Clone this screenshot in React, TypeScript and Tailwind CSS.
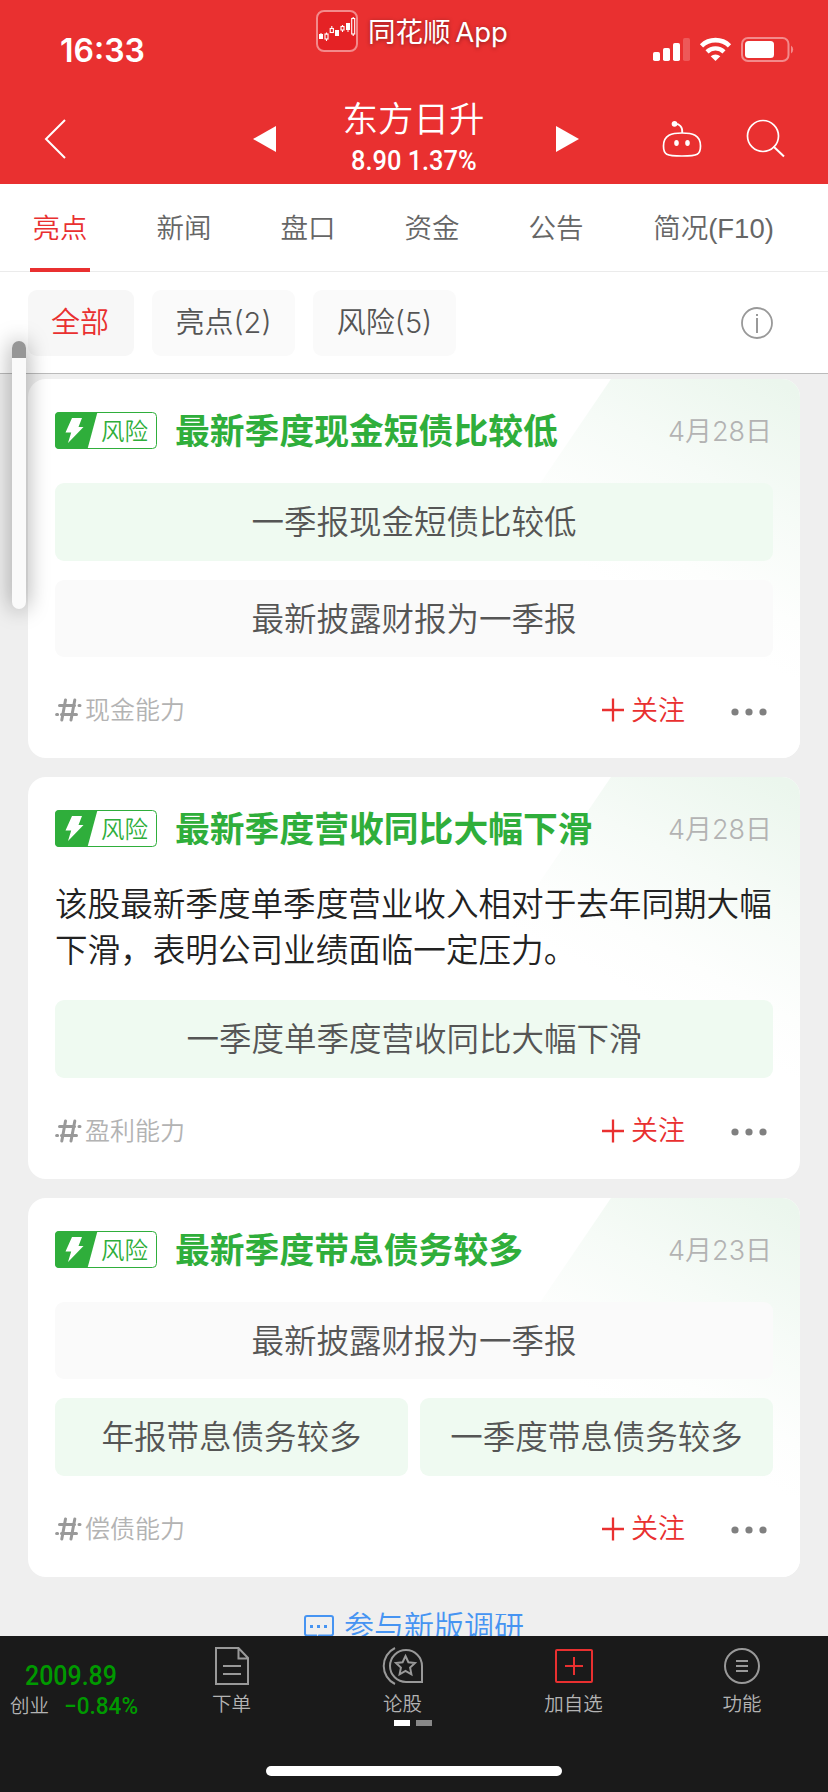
import type { ReactNode } from "react";

type Fact = { text: string; tone: "green" | "gray"; half?: boolean };

type Risk = {
  title: string;
  date: string;
  desc?: string;
  facts: Fact[];
  tag: string;
};

const TABS = ["亮点", "新闻", "盘口", "资金", "公告", "简况(F10)"];

const RISKS: Risk[] = [
  {
    title: "最新季度现金短债比较低",
    date: "4月28日",
    facts: [
      { text: "一季报现金短债比较低", tone: "green" },
      { text: "最新披露财报为一季报", tone: "gray" },
    ],
    tag: "现金能力",
  },
  {
    title: "最新季度营收同比大幅下滑",
    date: "4月28日",
    desc: "该股最新季度单季度营业收入相对于去年同期大幅下滑，表明公司业绩面临一定压力。",
    facts: [{ text: "一季度单季度营收同比大幅下滑", tone: "green" }],
    tag: "盈利能力",
  },
  {
    title: "最新季度带息债务较多",
    date: "4月23日",
    facts: [
      { text: "最新披露财报为一季报", tone: "gray" },
      { text: "年报带息债务较多", tone: "green", half: true },
      { text: "一季度带息债务较多", tone: "green", half: true },
    ],
    tag: "偿债能力",
  },
];

const AppLogo = () => (
  <svg width="42" height="42" viewBox="0 0 42 42" fill="none">
    <rect x="1" y="1" width="40" height="40" rx="7" fill="#e52225" stroke="#f38a8b" strokeWidth="2" />
    <g fill="#fff">
      <path d="M4.500 23h1v2h-1zM31.500 20h1v2h-1z" />
      <rect x="3" y="24" width="4" height="5" />
      <rect x="19" y="20" width="4" height="6" />
      <rect x="30" y="13" width="4" height="7" />
    </g>
    <g stroke="#fff" strokeWidth="1.100">
      <path d="M10.500 22.500v2M10.500 29v2M15.800 16v2.500M26.500 15v2M26.500 20v2M37.200 7v1.500M37.200 24v2" />
      <rect x="9" y="24" width="3" height="5" />
      <rect x="14.200" y="18.500" width="3.200" height="4" />
      <rect x="25" y="16.500" width="3" height="3.500" />
      <rect x="35.700" y="8.500" width="3" height="15.500" />
    </g>
  </svg>
);

const StatusIcons = () => (
  <svg width="142" height="26" viewBox="0 0 142 26" fill="none">
    <g fill="#fff">
      <rect x="0" y="15" width="7" height="9" rx="1.800" />
      <rect x="10" y="11" width="7" height="13" rx="1.800" />
      <rect x="20" y="6" width="7" height="18" rx="1.800" />
      <rect x="30" y="1" width="7" height="23" rx="1.800" opacity=".2" />
      <path d="M62.500 24l-4.800-4.700a7.200 7.200 0 0 1 9.600 0z" />
    </g>
    <path d="M48.500 8.800a20 20 0 0 1 28 0" stroke="#fff" strokeWidth="4.600" />
    <path d="M54 14.800a12.300 12.300 0 0 1 17 0" stroke="#fff" strokeWidth="4.400" />
    <rect x="89" y="1" width="46.500" height="23" rx="6" stroke="#f38a8b" strokeWidth="2" />
    <rect x="92" y="4" width="29" height="17" rx="3.500" fill="#fff" />
    <path d="M138 8.500a4.800 4.800 0 0 1 0 8z" fill="#f38a8b" />
  </svg>
);

const RobotIcon = () => (
  <svg width="42" height="38" viewBox="0 0 42 38" fill="none" stroke="#fff" strokeWidth="1.700">
    <path d="M21 13c10 0 18.500 1.500 18.500 13 0 8.500-2.500 10-18.500 10S2.500 34.500 2.500 26C2.500 14.500 11 13 21 13z" />
    <path d="M13.500 4c5-.500 8.500 3 7.700 9" />
    <circle cx="13.500" cy="3.800" r="2" fill="#fff" />
    <g fill="#fff" stroke="none">
      <ellipse cx="15.500" cy="23" rx="2.300" ry="3" />
      <ellipse cx="26.500" cy="23" rx="2.300" ry="3" />
    </g>
  </svg>
);

const RiskBadge = () => (
  <div className="relative h-[37px] w-[102px] shrink-0">
    <svg className="block" width="102" height="37" viewBox="0 0 102 37" fill="none">
      <rect x=".5" y=".5" width="101" height="36" rx="4" fill="#fff" stroke="#2fae3b" />
      <path d="M4 0h38.500L32.500 37H4a4 4 0 0 1-4-4V4a4 4 0 0 1 4-4z" fill="#2fae3b" />
      <path d="M17 6h10l-3.500 9H28.500L13 31l3.200-10.500H10.500z" fill="#fff" />
    </svg>
    <span className="absolute top-[1px] left-[46px] text-[23.500px] leading-[37px] whitespace-nowrap text-[#2fae3b]">
      风险
    </span>
  </div>
);

const HashIcon = () => (
  <svg width="27" height="24" viewBox="0 0 27 24" fill="none" stroke="#999" strokeWidth="3" strokeLinecap="round">
    <path d="M10.500 2L6.800 22M19.800 2L16 22M4.500 7.500H19.500M24 7.500h1M6.500 16.500H21.500M1.600 16.500h1" />
  </svg>
);

const RiskCard = ({ risk }: { risk: Risk }) => (
  <article className="relative overflow-hidden rounded-[18px] bg-white px-[27px] pt-[33px] pb-7">
    {/* slanted green glow in the top right corner */}
    <svg className="absolute top-0 right-0" width="360" height="380" viewBox="0 0 360 380">
      <defs>
        <linearGradient id="glow" gradientUnits="userSpaceOnUse" x1="350" y1="10" x2="230" y2="235">
          <stop offset="0" stopColor="#ebf6ed" />
          <stop offset=".45" stopColor="#f6fbf7" />
          <stop offset=".8" stopColor="#fdfefd" />
          <stop offset="1" stopColor="#fff" />
        </linearGradient>
      </defs>
      <path d="M171 0h189v380H-87z" fill="url(#glow)" />
    </svg>
    <div className="relative">
      <header className="flex h-[37px] items-center">
        <RiskBadge />
        <h2 className="mt-[2px] ml-[18px] text-[34.800px] leading-[37px] font-bold whitespace-nowrap text-[#2fae3b]">
          {risk.title}
        </h2>
        <time className="mt-[2px] mr-[1px] ml-auto text-[27px] leading-[37px] whitespace-nowrap text-[#b3b3b3]">
          {risk.date}
        </time>
      </header>
      {risk.desc && (
        <p className="mt-[34px] -mb-[7px] text-[32.600px] leading-[46px] break-all text-[#222]">{risk.desc}</p>
      )}
      <div className="mt-[34px] grid grid-cols-2 gap-x-3 gap-y-[19px]">
        {risk.facts.map((fact) => (
          <div
            key={fact.text}
            className={`flex h-[77.500px] items-center justify-center rounded-[9px] pt-[4px] text-[32.500px] whitespace-nowrap text-[#555] ${
              fact.half ? "" : "col-span-2"
            } ${fact.tone === "green" ? "bg-[#effaf1]" : "bg-[#fafafa]"}`}
          >
            {fact.text}
          </div>
        ))}
      </div>
      <footer className="mt-[33px] flex h-10 items-center">
        <HashIcon />
        <span className="mt-[2px] ml-[3px] text-[25px] text-[#b3b3b3]">{risk.tag}</span>
        <button className="ml-auto flex items-center text-[27px] text-[#e93030]">
          <svg className="mr-[7px]" width="22" height="24" viewBox="0 0 22 24" stroke="#e93030" strokeWidth="2.300">
            <path d="M0 12h22M11 .5v23" />
          </svg>
          <span className="mt-[2px]">关注</span>
        </button>
        <svg className="mt-[3px] mr-[6px] ml-[46px]" width="36" height="8" viewBox="0 0 36 8" fill="#808080">
          <circle cx="4" cy="4" r="3.600" />
          <circle cx="18" cy="4" r="3.600" />
          <circle cx="32" cy="4" r="3.600" />
        </svg>
      </footer>
    </div>
  </article>
);

const NavItem = ({ label, children }: { label: string; children: ReactNode }) => (
  <button className="flex w-[171px] flex-col items-center last:w-[166px]">
    <span className="flex h-[44px] items-center justify-center">{children}</span>
    <span className="mt-[2px] text-[19.500px] leading-[28px] text-[#b3b3b3]">{label}</span>
  </button>
);

export default function App() {
  return (
    <div className="relative flex h-[1792px] w-[828px] flex-col overflow-hidden bg-[#efefef] font-[Inter,'Noto_Sans_CJK_SC',sans-serif] font-[350]">
      <div className="h-[184px] shrink-0 bg-[#e93030] text-white">
        <div className="flex h-[84px]">
          <span className="w-[316px] pt-[33px] pl-[60px] text-[32px] leading-[36px] font-semibold">16:33</span>
          <div className="flex items-start gap-[10px] pt-[10px]">
            <AppLogo />
            <span className="text-[27.500px] leading-[44px] font-normal whitespace-nowrap [text-shadow:0_1px_4px_#0006] [word-spacing:-3px]">
              同花顺 App
            </span>
          </div>
          <div className="ml-auto pt-[37px] pr-[33px]">
            <StatusIcons />
          </div>
        </div>
        <div className="flex h-[100px] items-start">
          <svg className="mt-[35px] ml-[44px]" width="22" height="40" viewBox="0 0 22 40" fill="none" stroke="#fff" strokeWidth="2">
            <path d="M21 1L2 20l19 19" />
          </svg>
          <svg className="mt-[42px] ml-[187px]" width="23" height="26" viewBox="0 0 23 26" fill="#fff">
            <path d="M23 0v26L0 13z" />
          </svg>
          <div className="flex w-[280px] flex-col items-center pr-[5px]">
            <h1 className="mt-[15px] text-[35.500px] leading-[42px]">东方日升</h1>
            <p className="mt-[5px] origin-center scale-x-[.94] font-[Roboto,sans-serif] text-[27px] leading-[30px] font-medium whitespace-nowrap">
              8.90 1.37%
            </p>
          </div>
          <svg className="mt-[42px]" width="23" height="26" viewBox="0 0 23 26" fill="#fff">
            <path d="M0 0v26l23-13z" />
          </svg>
          <div className="mt-[36px] ml-[82px]">
            <RobotIcon />
          </div>
          <svg className="mt-[35px] ml-[43px]" width="40" height="40" viewBox="0 0 40 40" fill="none" stroke="#fff" strokeWidth="1.700">
            <circle cx="17" cy="17" r="15.500" />
            <path d="M27.500 27.500L38 37.500" strokeWidth="2" />
          </svg>
        </div>
      </div>

      <nav className="flex h-[88px] shrink-0 border-b border-[#ebebeb] bg-white pl-[30px] font-['Liberation_Sans','Noto_Sans_CJK_SC',sans-serif] text-[27.500px] text-[#666]">
        {TABS.map((tab, i) => (
          <button
            key={tab}
            className={`relative mr-[64px] flex h-[88px] w-[60px] shrink-0 items-center justify-center pt-[2px] whitespace-nowrap last:w-[127px] ${
              i === 0 ? "text-[#e93030]" : ""
            }`}
          >
            {tab}
            {i === 0 && <span className="absolute inset-x-0 bottom-0 h-1 bg-[#e93030]" />}
          </button>
        ))}
      </nav>

      <div className="flex h-[102px] shrink-0 items-center border-b border-[#bbb] bg-white pl-7 text-[29px] text-[#555]">
        <button className="h-[66px] w-[106px] rounded-[9px] bg-[#f7f7f7] pr-[2px] text-[#e93030]">全部</button>
        <button className="ml-[18px] h-[66px] w-[143px] rounded-[9px] bg-[#fafafa]">亮点(2)</button>
        <button className="ml-[18px] h-[66px] w-[143px] rounded-[9px] bg-[#fafafa]">风险(5)</button>
        <svg className="mr-[55px] ml-auto" width="32" height="32" viewBox="0 0 32 32" fill="none" stroke="#999">
          <circle cx="16" cy="16" r="15" strokeWidth="1.800" />
          <path d="M16 11v15M16 7v2" strokeWidth="2" />
        </svg>
      </div>

      <main className="flex min-h-0 flex-1 flex-col overflow-hidden px-7 pt-[5px]">
        <div className="flex flex-col gap-[19px]">
          {RISKS.map((risk) => (
            <RiskCard key={risk.title} risk={risk} />
          ))}
        </div>
        {/* partly scrolled under the bottom bar */}
        <a className="mt-[30px] flex h-[40px] shrink-0 items-center justify-center gap-[10px] text-[30px] whitespace-nowrap text-[#4694f2]">
          <svg className="mt-[5px]" width="30" height="28" viewBox="0 0 30 28" fill="none" stroke="#4694f2" strokeWidth="2">
            <path d="M12 20.500H3a2 2 0 0 1-2-2V3a2 2 0 0 1 2-2h24a2 2 0 0 1 2 2v15.500a2 2 0 0 1-2 2H15l-3 4z" />
            <path d="M6 11.500h3M13 11.500h3M20 11.500h3" strokeWidth="3" />
          </svg>
          参与新版调研
        </a>
      </main>

      <div className="flex h-[156px] shrink-0 flex-col bg-[#1a1a1a]">
        <div className="flex h-[130px] pt-2">
          <div className="w-[146px] pt-[17px]">
            <p className="w-[142px] origin-center scale-x-[.89] text-center font-[Roboto,sans-serif] text-[28px] leading-[30px] font-medium text-[#090]">
              2009.89
            </p>
            <p className="flex items-center pl-[10px] text-[19.500px] leading-[31px] whitespace-nowrap text-[#b3b3b3]">
              创业
              <span className="ml-[15px] origin-left scale-x-[.94] font-[Roboto,sans-serif] text-[24px] font-medium text-[#090]">
                −0.84%
              </span>
            </p>
          </div>
          <NavItem label="下单">
            <svg width="34" height="38" viewBox="0 0 34 38" fill="none" stroke="#999" strokeWidth="2">
              <path d="M1 1h22.500L33 11v26H1zM23.500 1v10.500H33M8 19h18M8 27h18" />
            </svg>
          </NavItem>
          <div className="relative w-[171px] shrink-0">
            <NavItem label="论股">
              <svg width="42" height="38" viewBox="0 0 42 38" fill="none" stroke="#999" strokeWidth="2">
                <path d="M13 1a20 20 0 0 0 0 36M24 3a16 16 0 0 0 0 32h16V19A16 16 0 0 0 24 3z" />
                <path d="M23.500 9l2.900 6.200 6.600.8-4.900 4.600 1.300 6.700-5.900-3.300-5.900 3.300 1.300-6.700L14 16l6.600-.8z" />
              </svg>
            </NavItem>
            <span className="absolute top-[76px] left-[77px] h-[6px] w-4 bg-white" />
            <span className="absolute top-[76px] left-[99px] h-[6px] w-4 bg-[#888]" />
          </div>
          <NavItem label="加自选">
            <svg width="38" height="34" viewBox="0 0 38 34" fill="none" stroke="#e93030" strokeWidth="2">
              <rect x="1" y="1" width="36" height="32" rx="1" />
              <path d="M10 17h18M19 8v18" />
            </svg>
          </NavItem>
          <NavItem label="功能">
            <svg width="36" height="36" viewBox="0 0 36 36" fill="none" stroke="#999" strokeWidth="2">
              <circle cx="18" cy="18" r="17" />
              <path d="M12 13h12M12 18h12M12 23h12" />
            </svg>
          </NavItem>
        </div>
        <div className="mx-auto h-[10px] w-[296px] rounded-full bg-white" />
      </div>

      {/* floating scroll handle */}
      <div className="absolute top-[341px] left-3 h-[268px] w-[14px] rounded-full bg-[#fafafa] shadow-[0_0_22px_#0006]">
        <div className="h-[17px] rounded-t-full bg-[#969696]" />
      </div>
    </div>
  );
}
